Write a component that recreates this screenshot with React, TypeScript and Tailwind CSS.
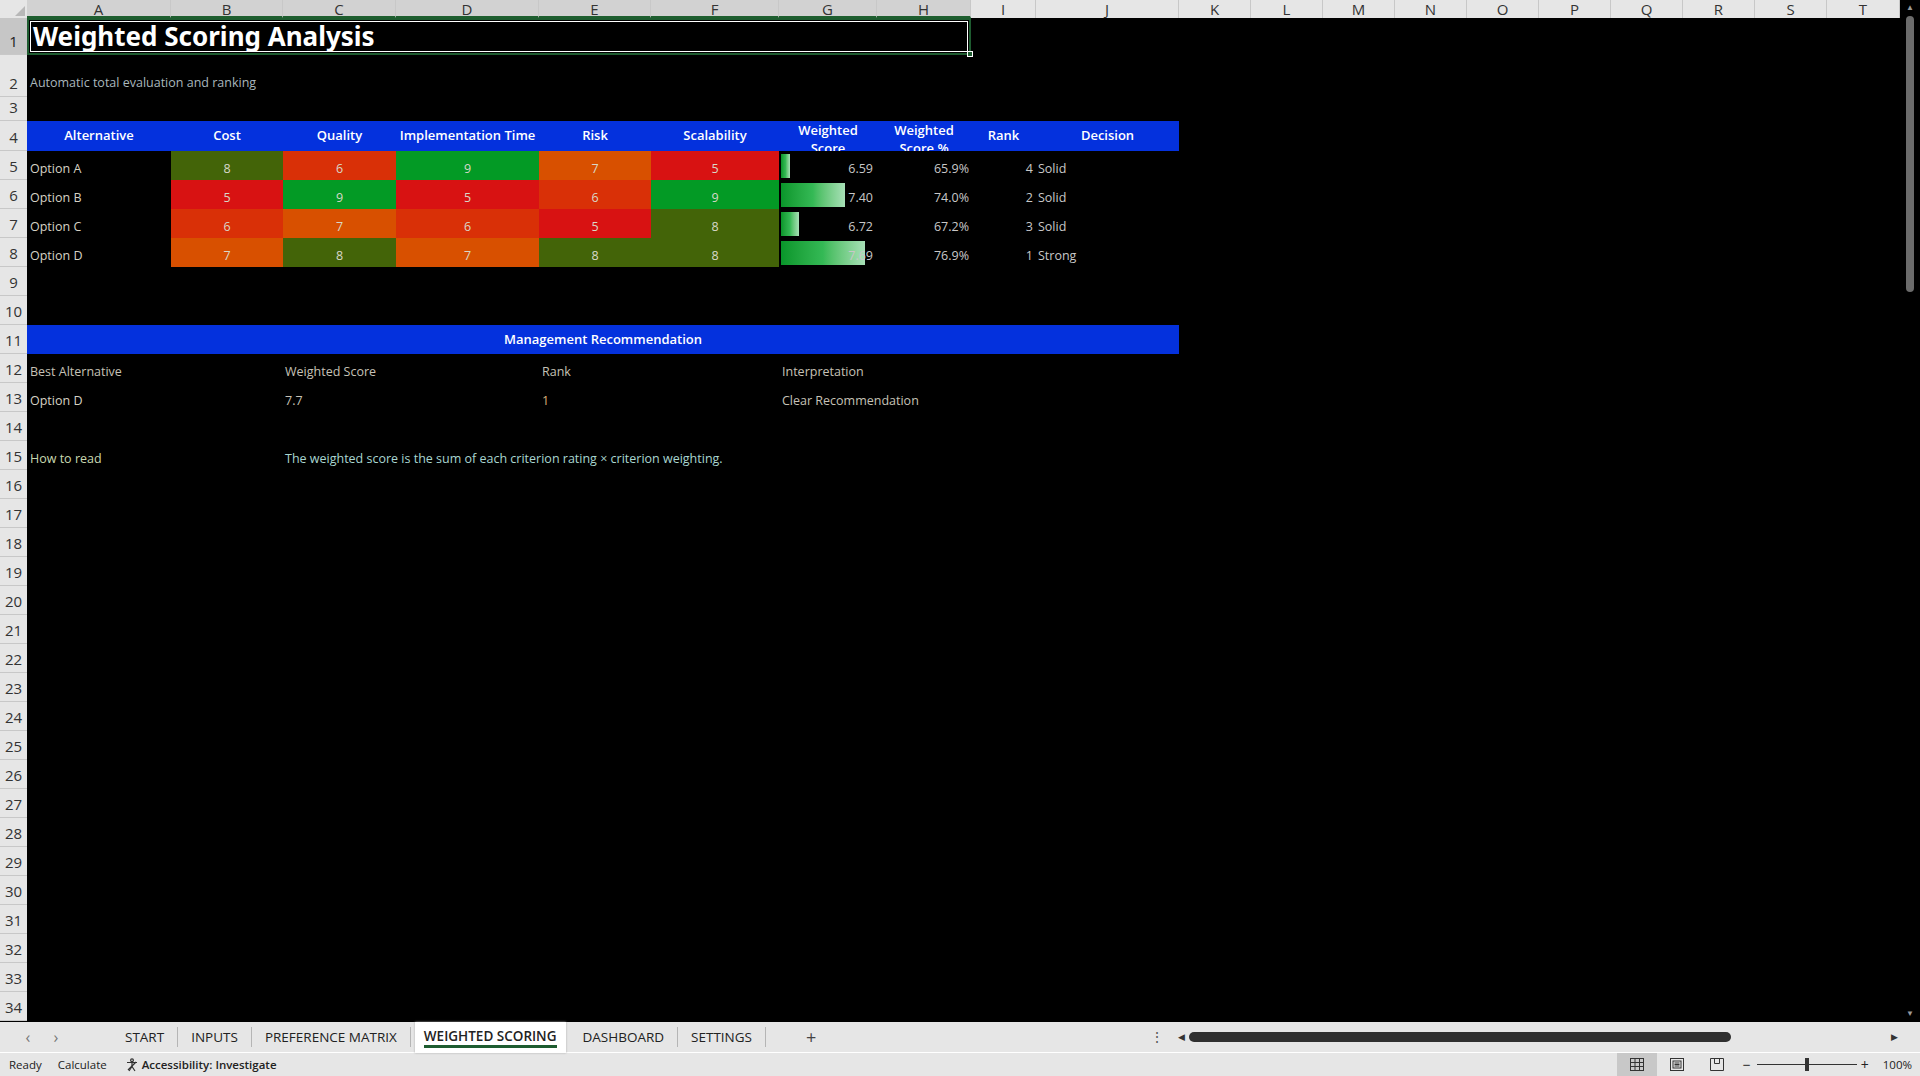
import React from "react";

const W = ["w-[144px]","w-[112px]","w-[113px]","w-[143px]","w-[112px]","w-[128px]","w-[98px]","w-[94px]","w-[65px]","w-[143px]"];
const letters = ["A","B","C","D","E","F","G","H","I","J","K","L","M","N","O","P","Q","R","S","T"];
const font = { fontFamily: "'Open Sans','Noto Sans',sans-serif" };

const heat: Record<number, string> = {
  5: "bg-[#d81212]",
  6: "bg-[#d93007]",
  7: "bg-[#d85000]",
  8: "bg-[#436408]",
  9: "bg-[#039a25]",
};

const data = [
  { n: "Option A", v: [8, 6, 9, 7, 5], s: "6.59", p: "65.9%", r: 4, d: "Solid", bar: 9 },
  { n: "Option B", v: [5, 9, 5, 6, 9], s: "7.40", p: "74.0%", r: 2, d: "Solid", bar: 64 },
  { n: "Option C", v: [6, 7, 6, 5, 8], s: "6.72", p: "67.2%", r: 3, d: "Solid", bar: 18 },
  { n: "Option D", v: [7, 8, 7, 8, 8], s: "7.69", p: "76.9%", r: 1, d: "Strong", bar: 84 },
];

function RowNum({ n, h, active }: { n: number; h: string; active?: boolean }) {
  return (
    <div className={`w-[27px] shrink-0 ${h} flex items-end justify-center pb-[2px] text-[15px] border-b border-[#c8c8c8] ${active ? "bg-[#c6c6c6] text-[#222]" : "bg-[#e6e6e6] text-[#333]"}`}>{n}</div>
  );
}

export default function App() {
  const rowsBelow = Array.from({ length: 19 }, (_, i) => 16 + i);
  return (
    <div className="w-[1920px] h-[1076px] bg-black overflow-hidden flex flex-col select-none text-[12.5px]" style={font}>
      <div className="flex flex-1 min-h-0">
        <div className="flex-1 flex flex-col min-w-0">
          <div className="flex h-[18px] shrink-0 bg-[#e6e6e6] text-[15px] text-[#333] leading-[18px]">
            <div className="w-[27px] shrink-0 bg-[#e6e6e6] relative">
              <div className="absolute right-[2px] bottom-[2px] w-0 h-0 border-l-[10px] border-l-transparent border-b-[10px] border-b-[#b8b8b8]" />
            </div>
            {letters.map((l, i) => (
              <div key={l} className={`${i < 10 ? W[i] : i === 19 ? "w-[73px]" : "w-[72px]"} shrink-0 text-center border-r border-[#c8c8c8] ${i < 8 ? "bg-[#d2d2d2] border-b-2 border-b-[#1f5f2f]" : ""}`}>{l}</div>
            ))}
          </div>
          <div className="flex h-[37px] shrink-0">
            <RowNum n={1} h="h-[37px]" active />
            <div className="w-[944px] h-[37px] border-2 border-[#1e5c30] relative flex items-center">
              <div className="absolute inset-[1px] border border-white" />
              <span className="pl-[4px] text-white font-bold text-[26px]" style={{ fontFamily: "'Noto Sans',sans-serif" }}>Weighted Scoring Analysis</span>
              <div className="absolute right-[-4px] bottom-[-4px] w-[6px] h-[6px] bg-[#1e5c30] border border-white" />
            </div>
          </div>
          <div className="flex h-[42px] shrink-0">
            <RowNum n={2} h="h-[42px]" />
            <div className="flex items-end pb-[4px] pl-[3px] text-[#a9b7bd]">Automatic total evaluation and ranking</div>
          </div>
          <div className="flex h-[24px] shrink-0"><RowNum n={3} h="h-[24px]" /></div>
          <div className="flex h-[30px] shrink-0">
            <RowNum n={4} h="h-[30px]" />
            {["Alternative","Cost","Quality","Implementation Time","Risk","Scalability"].map((t, i) => (
              <div key={t} className={`${W[i]} shrink-0 bg-[#0431dd] text-white font-semibold text-[13px] flex items-center justify-center`}>{t}</div>
            ))}
            <div className={`${W[6]} shrink-0 bg-[#0431dd] text-white font-semibold text-[13px] text-center leading-[18px] overflow-hidden`}>Weighted<br />Score</div>
            <div className={`${W[7]} shrink-0 bg-[#0431dd] text-white font-semibold text-[13px] text-center leading-[18px] overflow-hidden`}>Weighted<br />Score %</div>
            <div className={`${W[8]} shrink-0 bg-[#0431dd] text-white font-semibold text-[13px] flex items-center justify-center`}>Rank</div>
            <div className={`${W[9]} shrink-0 bg-[#0431dd] text-white font-semibold text-[13px] flex items-center justify-center`}>Decision</div>
          </div>
          {data.map((r, ri) => (
            <div key={r.n} className="flex h-[29px] shrink-0">
              <RowNum n={5 + ri} h="h-[29px]" />
              <div className={`${W[0]} shrink-0 flex items-end pb-[1px] pl-[3px] text-[#d6d2c4]`}>{r.n}</div>
              {r.v.map((v, i) => (
                <div key={i} className={`${W[i + 1]} shrink-0 ${heat[v]} flex items-end justify-center pb-[1px] text-[#d8d8c8]`}>{v}</div>
              ))}
              <div className={`${W[6]} shrink-0 relative flex items-end justify-end pb-[1px] pr-[4px] text-[#c8c8c8]`}>
                <div className="absolute left-[2px] top-[3px] bottom-[2px] bg-gradient-to-r from-[#07962a] via-[#34b955] to-[#a7e0b7]" style={{ width: r.bar }} />
                <span className="relative">{r.s}</span>
              </div>
              <div className={`${W[7]} shrink-0 flex items-end justify-end pb-[1px] pr-[2px] text-[#c8c8c8]`}>{r.p}</div>
              <div className={`${W[8]} shrink-0 flex items-end justify-end pb-[1px] pr-[3px] text-[#c8c8c8]`}>{r.r}</div>
              <div className={`${W[9]} shrink-0 flex items-end pb-[1px] pl-[2px] text-[#c8c8c8]`}>{r.d}</div>
            </div>
          ))}
          <div className="flex h-[29px] shrink-0"><RowNum n={9} h="h-[29px]" /></div>
          <div className="flex h-[29px] shrink-0"><RowNum n={10} h="h-[29px]" /></div>
          <div className="flex h-[29px] shrink-0">
            <RowNum n={11} h="h-[29px]" />
            <div className="w-[1152px] bg-[#0431dd] text-white font-semibold text-[13px] flex items-center justify-center">Management Recommendation</div>
          </div>
          <div className="flex h-[29px] shrink-0 text-[#c6c2b6]">
            <RowNum n={12} h="h-[29px]" />
            <div className="w-[256px] flex items-end pb-[1px] pl-[3px]">Best Alternative</div>
            <div className="w-[256px] flex items-end pb-[1px] pl-[2px]">Weighted Score</div>
            <div className="w-[240px] flex items-end pb-[1px] pl-[3px]">Rank</div>
            <div className="flex items-end pb-[1px] pl-[3px]">Interpretation</div>
          </div>
          <div className="flex h-[29px] shrink-0 text-[#c6c2b6]">
            <RowNum n={13} h="h-[29px]" />
            <div className="w-[256px] flex items-end pb-[1px] pl-[3px] text-[#d6d2c4]">Option D</div>
            <div className="w-[256px] flex items-end pb-[1px] pl-[2px]">7.7</div>
            <div className="w-[240px] flex items-end pb-[1px] pl-[3px] text-[#d9b07a]">1</div>
            <div className="flex items-end pb-[1px] pl-[3px]">Clear Recommendation</div>
          </div>
          <div className="flex h-[29px] shrink-0"><RowNum n={14} h="h-[29px]" /></div>
          <div className="flex h-[29px] shrink-0">
            <RowNum n={15} h="h-[29px]" />
            <div className="w-[256px] flex items-end pb-[1px] pl-[3px] text-[#c9d9b0]">How to read</div>
            <div className="flex items-end pb-[1px] pl-[2px] text-[#a9d6d0]">The weighted score is the sum of each criterion rating × criterion weighting.</div>
          </div>
          {rowsBelow.map((n) => (
            <div key={n} className="flex h-[29px] shrink-0"><RowNum n={n} h="h-[29px]" /></div>
          ))}
        </div>
        <div className="w-[20px] shrink-0 bg-black flex flex-col items-center text-[#9a9a9a]">
          <div className="text-[8px] leading-[14px]">▲</div>
          <div className="w-[8px] h-[276px] bg-[#6b6b6b] rounded-full mt-[2px]" />
          <div className="flex-1" />
          <div className="text-[8px] leading-[14px] mb-[2px]">▼</div>
        </div>
      </div>
      <div className="h-[31px] shrink-0 bg-[#e6e6e6] flex items-center text-[13.5px] text-[#222] border-b border-white">
        <div className="w-[70px] flex justify-around pl-[14px] text-[#777] text-[16px]"><span>‹</span><span>›</span></div>
        <div className="ml-[42px] flex items-center h-full">
          {["START", "INPUTS", "PREFERENCE MATRIX"].map((t) => (
            <div key={t} className="flex items-center h-full">
              <span className="px-[13px]">{t}</span>
              <span className="w-px h-[20px] bg-[#b5b5b5]" />
            </div>
          ))}
          <div className="mx-[4px] px-[9px] h-[31px] bg-white flex flex-col justify-center items-center relative shadow-[0_0_2px_#aaa]">
            <span className="font-semibold -mt-[2px]">WEIGHTED SCORING</span>
            <div className="absolute bottom-[5px] left-[9px] right-[9px] h-[3px] bg-[#1e5c30]" />
          </div>
          {["DASHBOARD", "SETTINGS"].map((t) => (
            <div key={t} className="flex items-center h-full">
              <span className="px-[13px]">{t}</span>
              <span className="w-px h-[20px] bg-[#b5b5b5]" />
            </div>
          ))}
          <span className="ml-[40px] text-[18px] text-[#444]">+</span>
        </div>
        <div className="ml-[334px] text-[#555]">⋮</div>
        <div className="ml-[14px] text-[9px] text-[#333]">◀</div>
        <div className="ml-[4px] w-[542px] h-[10px] rounded-full bg-[#2f2f2f]" />
        <div className="flex-1" />
        <div className="mr-[22px] text-[9px] text-[#333]">▶</div>
      </div>
      <div className="h-[23px] shrink-0 bg-[#e6e6e6] flex items-center text-[11.5px] text-[#222]">
        <span className="ml-[9px]">Ready</span>
        <span className="ml-[16px]">Calculate</span>
        <span className="ml-[18px] flex items-center gap-[3px] font-semibold">
          <svg width="14" height="14" viewBox="0 0 14 14" fill="none" stroke="#333" strokeWidth="1.2"><circle cx="7" cy="2.2" r="1.4" /><path d="M2 4.5h10M7 4.5v4M7 8.5l-3 4.5M7 8.5l3 4.5" /><path d="M3 12l8-8" /></svg>
          Accessibility: Investigate
        </span>
        <div className="flex-1" />
        <div className="w-[40px] h-full bg-[#c8c8c8] flex items-center justify-center">
          <svg width="14" height="13" viewBox="0 0 14 13" fill="none" stroke="#333" strokeWidth="1"><rect x="0.5" y="0.5" width="13" height="12" /><path d="M0.5 4.5h13M0.5 8.5h13M5 0.5v12M9.5 0.5v12" /></svg>
        </div>
        <div className="w-[40px] flex items-center justify-center">
          <svg width="14" height="13" viewBox="0 0 14 13" fill="none" stroke="#333" strokeWidth="1"><rect x="0.5" y="0.5" width="13" height="12" /><rect x="3" y="3" width="8" height="7" /><path d="M4.5 5h5M4.5 6.5h5M4.5 8h5" /></svg>
        </div>
        <div className="w-[40px] flex items-center justify-center">
          <svg width="14" height="13" viewBox="0 0 14 13" fill="none" stroke="#333" strokeWidth="1"><path d="M0.5 0.5h13v12M0.5 0.5v12h13M4.5 0.5v5h5v-5" /></svg>
        </div>
        <span className="ml-[6px] text-[14px]">−</span>
        <div className="ml-[6px] w-[100px] h-px bg-[#333] relative"><div className="absolute left-[48px] -top-[6px] w-[4px] h-[13px] bg-[#333]" /></div>
        <span className="ml-[4px] text-[14px]">+</span>
        <span className="ml-[14px] mr-[8px]">100%</span>
      </div>
    </div>
  );
}
